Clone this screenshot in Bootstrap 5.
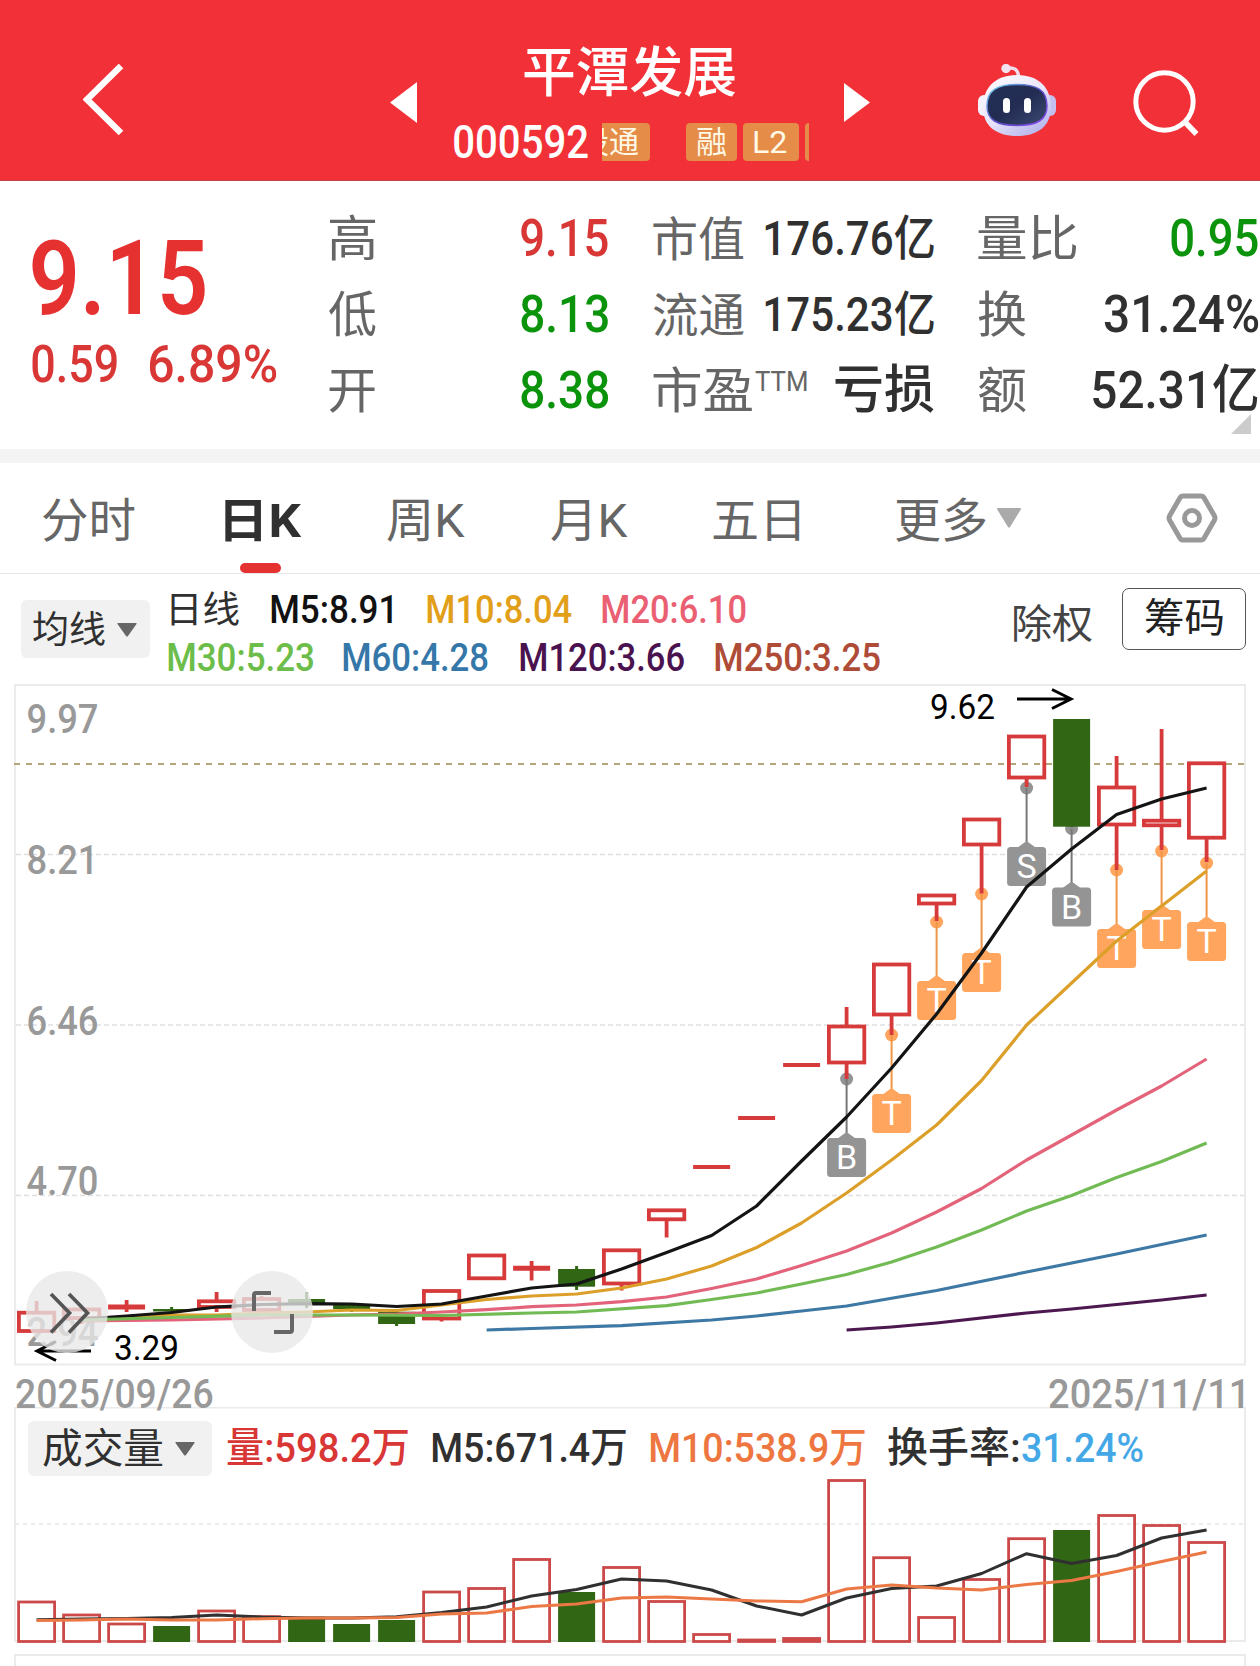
<!DOCTYPE html>
<html lang="zh-CN">
<head>
<meta charset="utf-8">
<meta name="viewport" content="width=device-width, initial-scale=1">
<title>平潭发展 000592</title>
<link href="https://cdn.jsdelivr.net/npm/bootstrap@5.3.0/dist/css/bootstrap.min.css" rel="stylesheet">
<script src="https://cdn.jsdelivr.net/npm/bootstrap@5.3.0/dist/js/bootstrap.bundle.min.js"></script>
<style>
:root{--up:#d93636;--down:#0b930b;--ink:#303030;--dim:#666;--face:Roboto,"Noto Sans CJK SC",sans-serif}
body{font-family:var(--face);line-height:1;color:var(--ink);background:#fff;width:1260px;overflow-x:hidden}
svg{display:block}
svg text{font-family:var(--face)}
.fit{display:inline-block;white-space:nowrap;transform-origin:0 50%;text-align:left}
.cells{display:grid;align-items:center;justify-items:start}
/* header */
.topbar{height:181px;background:#f23037;border-bottom:1px solid #c5414a;color:#fff;grid-template-columns:83px 307px 63px 391px 134px 155px 1fr}
.stock{grid-column:4;justify-self:start;width:356px;height:180px;padding-top:47px}
.stock-name{font-size:54px;font-weight:500;height:50px;margin-left:71px}
.stock-code{font-size:46px;font-weight:500;width:148px;margin-left:1px}
.code-row{height:38px;margin-top:26px}
.tag-strip{width:207px;height:38px}
.tag{height:38px;border-radius:4px;background:#e48c48;color:#fff8e4;font-size:31px;padding:0 11px}
.tag-cut{width:48px;border-radius:0 4px 4px 0;padding:0 11px 0 0;margin-right:36px}
.tag-rong{width:51px;margin-right:6px}
.tag-l2{width:56px;margin-right:6px}
.tag-next{width:9px;padding:0}
/* quote */
.quote{height:268px;grid-template-columns:329px 324px 325px 1fr;align-items:start}
.q-left{padding:46px 0 0 32px}
.q-price{font-size:103px;font-weight:600;color:#e63131;height:102px}
.q-change{font-size:52px;font-weight:500;color:var(--up);margin-top:10px;gap:32px}
.q-col{padding-top:20px}
.q-line{height:76px}
.q-label{color:var(--dim);font-size:49px}
.q-label-s{font-size:47px}
.q-val{font-size:52px;font-weight:500}
.q-val-s{font-size:48px}
.ttm{font-size:27px;font-weight:400;margin:0 0 17px 3px}
.c2{width:279px}.c3{width:281px}.c4{width:280px}
.up{color:var(--up)}.down{color:var(--down)}
.corner{right:9px;bottom:15px}
.band{height:14px;background:#f4f4f4}
/* tabs */
.ktabs{height:111px;border-bottom:1px solid #e6e6e6;grid-template-columns:43px 182px 162px 164px 162px 183px 101px 169px 1fr;color:var(--dim);font-size:47px}
.ktabs .fit{margin-top:4px}
.ktab-on{color:var(--ink);font-weight:700;height:110px}
.ktab-on::after{content:"";position:absolute;left:15px;bottom:0;width:41px;height:10px;border-radius:5px;background:#e63131}
/* averages */
.ma-bar{height:110px;grid-template-columns:21px 146px 847px 108px 1fr}
.pick{background:#f1f1f1;border-radius:6px}
.pick-ma{width:129px;height:58px;padding:2px 13px 0 12px;font-size:37px}
.ma-rows{height:110px;font-size:39px;font-weight:500;align-self:start}
.ma-a,.ma-b{height:48px}
.ma-a{margin-top:12px;grid-template-columns:4px 100px 156px 175px 1fr}
.ma-b{grid-template-columns:1px 175px 177px 195px 1fr}
.ma-title{font-size:37px;font-weight:400}
.m5{color:#111}.m10{color:#e2a01a}.m20{color:#ea6072}.m30{color:#6cbd49}.m60{color:#3577a8}.m120{color:#4a134f}.m250{color:#ae4c38}
.chuquan{font-size:40px;color:#444;margin-top:-9px}
.chouma{width:124px;height:62px;border:1px solid #555;border-radius:7px;font-size:40px;color:#222;margin-top:-20px}
/* chart */
.round-btn{width:82px;height:82px;background:rgba(232,232,232,.78);border:0;padding:0;top:587px}
.rb-a{left:26px}.rb-b{left:231px}
.dates{height:41px;font-size:40px;font-weight:500;color:#999;padding:9px 17px 0 16px;z-index:1}
.vol-head{left:0;top:14px;width:1260px;height:55px;grid-template-columns:28px 199px 205px 218px 238px 134px 1fr;font-size:41px;font-weight:500}
.pick-vol{width:184px;height:55px;padding:1px 17px 0 15px;font-size:41px;font-weight:400}
.vm10{color:#ee7640}.vturn{color:#45a8e6}
.fw-n{font-weight:400}
</style>
</head>
<body>
<header class="topbar cells">
  <span></span>
  <svg width="42" height="76" viewBox="0 0 42 76" class="mt-4"><path d="M38 5 4 38.500l34 33.500" transform="translate(0 -3)" fill="none" stroke="#fff" stroke-width="6.5"/></svg>
  <svg width="28" height="42" viewBox="0 0 28 42" class="mt-4"><path d="M27 1v41L0 21.500z" fill="#fff"/></svg>
  <div class="stock">
    <div class="stock-name"><span class="fit" data-w="212">平潭发展</span></div>
    <div class="code-row d-flex align-items-center">
      <div class="stock-code"><span class="fit" data-w="134">000592</span></div>
      <div class="tag-strip d-flex overflow-hidden">
        <span class="tag tag-cut d-flex align-items-center justify-content-end overflow-hidden flex-shrink-0"><span class="fit" data-w="59">股通</span></span>
        <span class="tag tag-rong d-flex align-items-center flex-shrink-0"><span class="fit" data-w="29">融</span></span>
        <span class="tag tag-l2 d-flex align-items-center flex-shrink-0"><span class="fit" data-w="33">L2</span></span>
        <span class="tag tag-next flex-shrink-0"></span>
      </div>
    </div>
  </div>
  <svg width="28" height="42" viewBox="0 0 28 42" class="mt-4"><path d="M0 2v39l26-19.500z" fill="#fff"/></svg>
  <svg width="80" height="76" viewBox="978 64 80 76" class="mt-4">
    <defs>
      <linearGradient id="shell" x1="0" y1="0" x2=".7" y2="1"><stop offset="0" stop-color="#fff"/><stop offset=".6" stop-color="#e6e3fa"/><stop offset="1" stop-color="#b9b6ec"/></linearGradient>
      <linearGradient id="rim" x1="0" y1="0" x2="1" y2="1"><stop offset="0" stop-color="#6fd6e8"/><stop offset=".5" stop-color="#5a4fc8"/><stop offset="1" stop-color="#8a4be8"/></linearGradient>
      <linearGradient id="visor" x1="0" y1="0" x2="1" y2="1"><stop offset="0" stop-color="#222f55"/><stop offset=".5" stop-color="#232d54"/><stop offset="1" stop-color="#3d4a72"/></linearGradient>
    </defs>
    <path d="M1006 68.500c8-2 12 1 12.500 8" fill="none" stroke="#efdcec" stroke-width="3.500"/>
    <circle cx="1006" cy="68.500" r="4.700" fill="#f3e2f0"/>
    <rect x="978" y="95" width="12" height="21" rx="6" fill="#f4f2fd"/><rect x="1044" y="95" width="12" height="21" rx="6" fill="#c4c0ee"/>
    <path d="M1017 75c23 0 34 14 34 32 0 19-13 29-34 29s-34-10-34-29c0-18 11-32 34-32z" fill="url(#shell)"/>
    <path d="M1017 84.500c19 0 30 5 30 21.500 0 14-10 19.500-30 19.500s-30-5.500-30-19.500c0-16.500 11-21.500 30-21.500z" fill="url(#visor)" stroke="url(#rim)" stroke-width="1.500"/>
    <rect x="1003" y="98" width="7" height="15" rx="3.500" fill="#fff"/><rect x="1024" y="98" width="7" height="15" rx="3.500" fill="#fff"/>
  </svg>
  <svg width="68" height="68" viewBox="0 -1.500 68 68" class="mt-4"><circle cx="31.500" cy="32" r="28.700" fill="none" stroke="#fff" stroke-width="5"/><path d="m51.500 52 12 12.500" stroke="#fff" stroke-width="5.500"/></svg>
</header>

<section class="quote cells position-relative">
  <div class="q-left">
    <div class="q-price"><span class="fit" data-w="173">9.15</span></div>
    <div class="q-change d-flex"><span class="fit" data-w="85">0.59</span><span class="fit" data-w="127">6.89%</span></div>
  </div>
  <div class="q-col c2">
    <div class="q-line d-flex align-items-center justify-content-between"><span class="fit q-label" data-w="46">高</span><span class="fit q-val up" data-w="87">9.15</span></div>
    <div class="q-line d-flex align-items-center justify-content-between"><span class="fit q-label" data-w="47">低</span><span class="fit q-val down" data-w="87">8.13</span></div>
    <div class="q-line d-flex align-items-center justify-content-between"><span class="fit q-label" data-w="46">开</span><span class="fit q-val down" data-w="87">8.38</span></div>
  </div>
  <div class="q-col c3">
    <div class="q-line d-flex align-items-center justify-content-between"><span class="fit q-label q-label-s" data-w="91">市值</span><span class="fit q-val q-val-s" data-w="169">176.76亿</span></div>
    <div class="q-line d-flex align-items-center justify-content-between"><span class="fit q-label q-label-s" data-w="91">流通</span><span class="fit q-val q-val-s" data-w="169">175.23亿</span></div>
    <div class="q-line d-flex align-items-center"><span class="fit q-label" data-w="99">市盈</span><span class="fit q-label ttm" data-w="52">TTM</span><span class="fit q-val ms-auto" data-w="99">亏损</span></div>
  </div>
  <div class="q-col c4">
    <div class="q-line d-flex align-items-center justify-content-between"><span class="fit q-label" data-w="99">量比</span><span class="fit q-val down" data-w="87">0.95</span></div>
    <div class="q-line d-flex align-items-center justify-content-between"><span class="fit q-label" data-w="48">换</span><span class="fit q-val" data-w="154">31.24%</span></div>
    <div class="q-line d-flex align-items-center justify-content-between"><span class="fit q-label" data-w="48">额</span><span class="fit q-val" data-w="165">52.31亿</span></div>
  </div>
  <svg class="corner position-absolute" width="20" height="20"><path d="M20 0v20H0z" fill="#ccc"/></svg>
</section>
<div class="band"></div>

<nav class="ktabs cells">
  <span></span>
  <span class="fit" data-w="92">分时</span>
  <span class="ktab-on position-relative d-flex align-items-center"><span class="fit" data-w="77">日K</span></span>
  <span class="fit" data-w="78">周K</span>
  <span class="fit" data-w="77">月K</span>
  <span class="fit" data-w="87">五日</span>
  <span class="fit" data-w="90">更多</span>
  <svg width="24" height="20"><path d="M1 0h22q1.500 0 .8 1.500L13 19q-1 1.500-2 0L.2 1.500Q-.5 0 1 0z" fill="#aaa"/></svg>
  <svg width="52" height="50" viewBox="0 0 52 50"><path d="M17 3h18q2 0 3 1.800L48.500 23q1 2 0 4L38 45.200q-1 1.800-3 1.800H17q-2 0-3-1.800L3.500 27q-1-2 0-4L14 4.800Q15 3 17 3z" fill="none" stroke="#999" stroke-width="5"/><circle cx="26" cy="25" r="7.500" fill="none" stroke="#999" stroke-width="5"/></svg>
</nav>

<section class="ma-bar cells">
  <span></span>
  <div class="pick pick-ma d-flex align-items-center justify-content-between"><span class="fit" data-w="72">均线</span><svg width="20" height="14"><path d="M1 0h18q1 0 .5 1L11 13q-1 1-2 0L.5 1Q0 0 1 0z" fill="#666"/></svg></div>
  <div class="ma-rows">
    <div class="ma-a cells"><span></span><span class="fit ma-title" data-w="68">日线</span><span class="fit m5" data-w="121">M5:8.91</span><span class="fit m10" data-w="145">M10:8.04</span><span class="fit m20" data-w="144">M20:6.10</span></div>
    <div class="ma-b cells"><span></span><span class="fit m30" data-w="145">M30:5.23</span><span class="fit m60" data-w="145">M60:4.28</span><span class="fit m120" data-w="164">M120:3.66</span><span class="fit m250" data-w="165">M250:3.25</span></div>
  </div>
  <span class="fit chuquan" data-w="78">除权</span>
  <div class="chouma d-flex align-items-center justify-content-center"><span class="fit" data-w="78">筹码</span></div>
</section>

<section class="position-relative">
  <svg id="kline" width="1260" height="682" viewBox="0 684 1260 682"></svg>
  <button class="round-btn rb-a rounded-circle position-absolute" aria-label="展开"><svg width="82" height="82" viewBox="26 1271 82 82" fill="none" stroke="#555" stroke-width="3.700"><path d="m51 1294 18.500 19L51 1332.500M69 1294l18.500 19L69 1332.500"/></svg></button>
  <button class="round-btn rb-b rounded-circle position-absolute" aria-label="全屏"><svg width="82" height="82" viewBox="231 1271 82 82" fill="none" stroke="#666" stroke-width="4"><path d="M271 1293h-15q-2 0-2 2v16M274 1332h16q2 0 2-2v-16"/></svg></button>
</section>

<div class="dates d-flex justify-content-between position-relative"><span class="fit" data-w="197">2025/09/26</span><span class="fit" data-w="194">2025/11/11</span></div>

<section class="position-relative">
  <svg id="volume" width="1260" height="259" viewBox="0 1407 1260 259"></svg>
  <div class="vol-head cells position-absolute">
    <span></span>
    <div class="pick pick-vol d-flex align-items-center justify-content-between"><span class="fit" data-w="120">成交量</span><svg width="20" height="14"><path d="M1 0h18q1 0 .5 1L11 13q-1 1-2 0L.5 1Q0 0 1 0z" fill="#666"/></svg></div>
    <span class="fit up" data-w="181">量:598.2万</span>
    <span class="fit" data-w="194">M5:671.4万</span>
    <span class="fit vm10" data-w="215">M10:538.9万</span>
    <span class="fit" data-w="131">换手率:</span>
    <span class="fit vturn" data-w="121">31.24%</span>
  </div>
</section>

<script>
// Condense each label so that its glyphs span exactly data-w pixels.
const ctx = document.createElement('canvas').getContext('2d');
document.querySelectorAll('.fit').forEach(el => {
  const cs = getComputedStyle(el), w = +el.dataset.w;
  ctx.font = `${cs.fontWeight} ${cs.fontSize} ${cs.fontFamily}`;
  const m = ctx.measureText(el.textContent);
  const s = w / (m.actualBoundingBoxLeft + m.actualBoundingBoxRight);
  el.style.width = w + 'px';
  el.style.flexShrink = 0;
  el.style.transform = `translateX(${m.actualBoundingBoxLeft * s}px) scaleX(${s})`;
});

const X = i => 36.6 + 45 * i, RED = '#d63a3a', GREEN = '#306614';
const line = (x1, y1, x2, y2, c, w, extra = '') => `<line x1="${x1}" y1="${y1}" x2="${x2}" y2="${y2}" stroke="${c}" stroke-width="${w}" ${extra}/>`;
const poly = (pts, c, w = 3.2) => `<polyline points="${pts.map(p => X(p[0]) + ',' + p[1]).join(' ')}" fill="none" stroke="${c}" stroke-width="${w}" stroke-linejoin="round"/>`;
const label = (x, y, w, size, c, t, weight = 400) => `<text x="${x}" y="${y}" textLength="${w}" lengthAdjust="spacingAndGlyphs" font-size="${size}" font-weight="${weight}" fill="${c}">${t}</text>`;

// index, body top, body bottom, high, low, direction
const candles = [
 [0,1312.7,1331,1301,1331,1],[1,1309.500,1318,1309,1324,1],[2,1307,1307,1300,1312,1],[3,1309,1311.500,1307,1312,0],
 [4,1301.300,1307,1292,1312,1],[5,1299,1310,1296,1310,1],[6,1299,1303,1292,1308,0],[7,1305,1309,1304,1312,0],
 [8,1311.700,1324,1311,1326,0],[9,1291,1318.500,1291,1321.500,1],[10,1255.500,1278.300,1256,1278,1],[11,1268.300,1268.300,1261,1280.500,1],
 [12,1269,1286.700,1266,1290,0],[13,1250.300,1283.500,1251,1290.500,1],[14,1210.300,1219.300,1211,1237.500,1],[15,1167,1167,1167,1167,1],
 [16,1118,1118,1118,1118,1],[17,1065,1065,1065,1065,1],[18,1026.500,1062.500,1007,1079,1],[19,964.500,1014.500,965,1035,1],
 [20,895.500,903.500,896,921,1],[21,819.500,844.500,820,893.500,1],[22,736.500,777.500,737,787,1],[23,719,826.700,719,827,0],
 [24,787.500,824.500,756,870,1],[25,820.700,825.300,729,850,1],[26,763.300,837.700,764,862,1]];
const signals = [[18,1079,'B'],[19,1035,'T'],[20,922,'T'],[21,894,'T'],[22,788,'S'],[23,828.5,'B'],[24,870,'T'],[25,851,'T'],[26,863,'T']];

let k = '<rect x="15" y="685" width="1230" height="679.5" fill="none" stroke="#ebebeb" stroke-width="2"/>';
[854.5,1025,1195.5].forEach(y => k += line(16, y, 1244, y, '#e0e0e0', 1.4, 'stroke-dasharray="5 3"'));
k += line(14, 764, 1245, 764, '#b5a57c', 2, 'stroke-dasharray="6 6"');
[[9.97,733],[8.21,873.5],[6.46,1034.5],['4.70',1195],[2.94,1346]].forEach(a => k += label(26.5, a[1], 72, 40.5, '#999', a[0], 500));
signals.forEach(([i,y,t]) => {
  const x = X(i), c = t === 'T' ? '#ffa55e' : '#949494', top = y + 59;
  k += `<circle cx="${x}" cy="${y}" r="6.5" fill="${c}"/>` + line(x, y, x, top - 4, t === 'T' ? '#f09546' : '#777', 2)
     + `<path d="M${x-9} ${top+.5}l9-6.500 9 6.500z" fill="${c}"/><rect x="${x-19.5}" y="${top}" width="39" height="39" rx="3.500" fill="${c}"/>`
     + `<text x="${x}" y="${top+31}" text-anchor="middle" font-size="34" fill="#fff">${t}</text>`;
});
candles.forEach(([i,a,b,h,l,up]) => {
  const x = X(i), c = up ? RED : GREEN;
  if (up) {
    if (b === a) k += line(x-18.5, a, x+18.5, a, c, i === 11 || i === 2 ? 5 : 4);
    else k += `<rect x="${x-17.7}" y="${a}" width="35.4" height="${b-a}" fill="none" stroke="${c}" stroke-width="3.800"/>`;
    if (h < a) k += line(x, h, x, a, c, 3.8);
    if (l > b) k += line(x, b, x, l, c, 3.8);
  } else k += `<rect x="${x-18.5}" y="${a}" width="37" height="${b-a}" fill="${c}"/>` + line(x, h, x, l, c, 3);
});
k += poly([[10,1330],[11,1328.500],[13,1325.700],[15,1320],[16,1316],[17,1311],[18,1306],[20,1290.500],[22,1272],[24,1254],[26,1235]], '#3e78a4');
k += poly([[18,1330],[19,1327],[20,1323],[22,1313],[23,1309],[24,1304.500],[25,1300],[26,1295]], '#4d1850');
k += poly([[1,1321],[3,1320],[5,1318],[7,1315],[8,1314],[9,1312],[10,1309.700],[11,1306.700],[12,1305],[13,1301.700],[14,1297],[15,1288.500],[16,1279],[17,1265.500],[18,1251],[19,1233],[20,1212],[21,1188.500],[22,1160],[23,1135],[24,1110],[25,1086],[26,1059]], '#e3647a');
k += poly([[1,1319],[3,1315],[4,1315],[5,1313],[6,1312],[7,1310],[8,1310.500],[9,1305],[10,1299.500],[11,1296],[12,1294],[13,1288],[14,1279],[15,1266],[16,1247.500],[17,1223],[18,1193],[19,1160],[20,1125],[21,1080.500],[22,1025],[23,983],[24,941],[25,906],[26,871]], '#dca02a');
k += poly([[1,1319],[2,1316],[3,1312.500],[4,1307],[5,1304.500],[6,1303.700],[7,1304],[8,1306.500],[9,1304],[10,1296],[11,1288],[12,1284],[13,1269],[14,1252.500],[15,1235.500],[16,1206],[17,1161],[18,1117],[19,1068],[20,1014],[21,953],[22,887],[23,849],[24,814.500],[25,799],[26,788]], '#141414');
k += poly([[1,1320],[3,1317.500],[5,1315],[7,1315],[9,1315.500],[11,1313],[12,1312],[14,1305.700],[15,1299.500],[16,1293],[17,1284],[18,1274.500],[19,1262],[20,1247],[21,1230],[22,1211],[23,1195.500],[24,1177.500],[25,1161.500],[26,1143]], '#72bb54');
k += label(930, 718.5, 65, 35, '#000', '9.62') + label(114, 1360, 65, 35, '#000', '3.29');
k += '<path d="M1017 699h53m-18-9.500 19 9.500-19 9.500M91 1351H38m18-9.500-19 9.500 19 9.500" fill="none" stroke="#000" stroke-width="3"/>';
document.getElementById('kline').innerHTML = k;

// bar tops with direction
const vols = [[1602,1],[1615,1],[1624,1],[1626,0],[1611,1],[1616.700,1],[1616.700,0],[1624,0],[1620,0],[1592,1],[1588.500,1],[1559.500,1],[1592,0],[1567.500,1],[1601.500,1],[1634.500,1],[1640,1],[1638.500,1],[1480.500,1],[1557.700,1],[1617.500,1],[1579.500,1],[1538.700,1],[1530,0],[1515.500,1],[1525.500,1],[1542.500,1]];
const v5 = [1619.7,1619,1618.5,1617.5,1615,1617,1618,1618,1616.7,1612.5,1607,1596,1589.500,1579,1581,1590,1606,1615,1598,1588.500,1586,1573.500,1553.700,1563.500,1555.500,1538,1530];
const v10 = [1620.5,1620,1619,1620,1620,1618.7,1618,1618,1617.500,1614,1613,1606.500,1604,1598,1597,1599,1601,1601.700,1589,1585,1588,1590,1584.500,1580.500,1571.500,1561.500,1552];
let v = '<rect x="15" y="1407.500" width="1230" height="233.5" fill="none" stroke="#ebebeb" stroke-width="2"/><path d="M15 1670V1655H1245V1670" fill="none" stroke="#ebebeb" stroke-width="2"/>'
  + line(15, 1524, 1244, 1524, '#e6e6e6', 1.6, 'stroke-dasharray="4 4"');
vols.forEach(([y,up], i) => {
  const x = X(i);
  v += up ? `<rect x="${x-18}" y="${y}" width="36" height="${1641.5-y}" fill="${i === 17 ? '#f05050' : 'none'}" stroke="#cc4949" stroke-width="2.800"/>`
          : `<rect x="${x-18.5}" y="${y}" width="37" height="${1642-y}" fill="${GREEN}"/>`;
});
v += poly(v5.map((y,i) => [i,y]), '#303030', 3) + poly(v10.map((y,i) => [i,y]), '#ec7845', 3);
document.getElementById('volume').innerHTML = v;
</script>
</body>
</html>
